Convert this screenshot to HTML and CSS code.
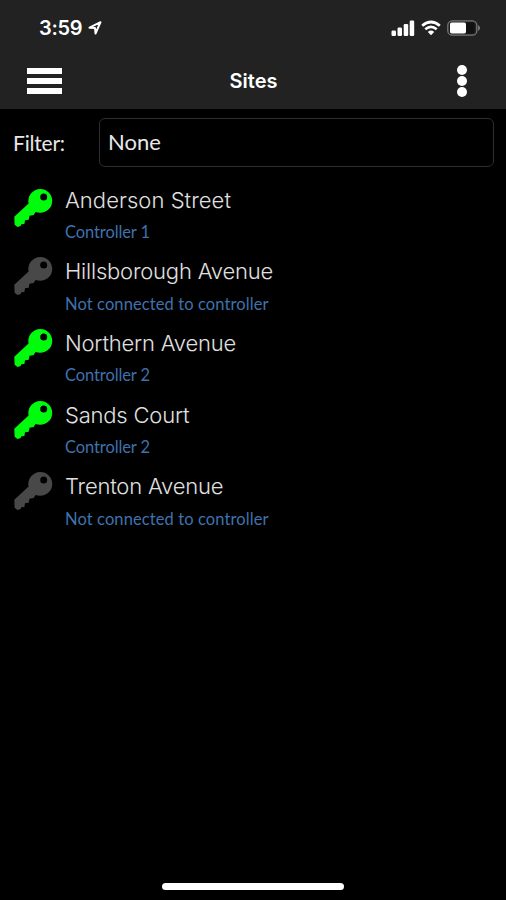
FILE: index.html
```html
<!DOCTYPE html>
<html lang="en">

<head>
    <meta charset="UTF-8">
    <meta name="viewport" content="width=device-width, initial-scale=1.0">
    <title>Sites</title>
    <link rel="stylesheet" href="styles.css">
</head>

<body>
    <svg class="sprite" aria-hidden="true">
        <symbol id="key" viewBox="0 0 40 40">
            <path fill-rule="evenodd" d="M27.300 1a11.900 11.900 0 0 1 0 23.800q-2.800 0-4.800-.800l-1.800 3-4.200.700-.800 4.100-3.700.500-.600 3.700-3.200.200-.500 1.900-3.200 1-2.900-2.300-.300-8L15.600 15.500A11.900 11.900 0 0 1 27.300 1zM30.700 5.500a3.500 3.500 0 1 0 0 7a3.500 3.500 0 0 0 0-7z" />
        </symbol>
    </svg>

    <header class="top">
        <div class="status">
            <div class="status-left">
                <span class="time">3:59</span>
                <svg class="location" width="14" height="14" viewBox="0 0 14 14">
                    <path d="M1.500 6.700 12.500 1.200 7.500 12.500 7 7z" fill="none" stroke="#fff" stroke-width="2" stroke-linejoin="round" />
                </svg>
            </div>
            <div class="status-right">
                <svg width="24" height="17" viewBox="0 0 24 17" fill="#fff">
                    <rect x="0.500" y="10.500" width="4.500" height="5.500" rx="1.200" />
                    <rect x="6.500" y="7.500" width="4.500" height="8.500" rx="1.200" />
                    <rect x="12.700" y="4" width="4.500" height="12" rx="1.200" />
                    <rect x="18.700" y="0.500" width="4.500" height="15.500" rx="1.200" />
                </svg>
                <svg width="20" height="16" viewBox="0 0 20 16">
                    <path d="M1.200 5.800Q10-1.800 18.800 5.800M4.300 9.300Q10 4.300 15.700 9.300" fill="none" stroke="#fff" stroke-width="2.700" />
                    <path d="M6.800 11.900Q10 9.300 13.200 11.900L10 15.300z" fill="#fff" />
                </svg>
                <svg width="34" height="16" viewBox="0 0 34 16">
                    <rect x="0.800" y="0.800" width="29" height="14.400" rx="4.500" fill="none" stroke="#777" stroke-width="1.300" />
                    <rect x="3" y="2.500" width="16" height="11" rx="1.800" fill="#fff" />
                    <rect x="19" y="2.500" width="8.500" height="11" rx="1.500" fill="#111" />
                    <path d="M31.300 5q3 3 0 6z" fill="#999" />
                </svg>
            </div>
        </div>
        <nav class="navbar">
            <button class="menu" aria-label="Menu">
                <span></span>
                <span></span>
                <span></span>
            </button>
            <h1>Sites</h1>
            <button class="more" aria-label="More">
                <span></span>
                <span></span>
                <span></span>
            </button>
        </nav>
    </header>

    <main>
        <section class="filter">
            <span class="filter-label">Filter:</span>
            <div class="filter-box">None</div>
        </section>
        <ul class="sites">
            <li class="site online">
                <svg class="key"><use href="#key" /></svg>
                <div>
                    <p class="name wide">Anderson Street</p>
                    <p class="controller">Controller 1</p>
                </div>
            </li>
            <li class="site">
                <svg class="key"><use href="#key" /></svg>
                <div>
                    <p class="name">Hillsborough Avenue</p>
                    <p class="controller none">Not connected to controller</p>
                </div>
            </li>
            <li class="site online">
                <svg class="key"><use href="#key" /></svg>
                <div>
                    <p class="name">Northern Avenue</p>
                    <p class="controller">Controller 2</p>
                </div>
            </li>
            <li class="site online">
                <svg class="key"><use href="#key" /></svg>
                <div>
                    <p class="name">Sands Court</p>
                    <p class="controller">Controller 2</p>
                </div>
            </li>
            <li class="site">
                <svg class="key"><use href="#key" /></svg>
                <div>
                    <p class="name">Trenton Avenue</p>
                    <p class="controller none">Not connected to controller</p>
                </div>
            </li>
        </ul>
    </main>

    <footer>
        <div class="home-bar"></div>
    </footer>
</body>

</html>
```
FILE: styles.css
```css
* {
  box-sizing: border-box;
  margin: 0;
  padding: 0;
}

body {
  display: flex;
  flex-direction: column;
  height: 100vh;
  overflow: hidden;
  background-color: #000;
  color: #e8e8e8;
  font-family: Inter, "Liberation Sans", sans-serif;
}

.sprite {
  display: none;
}

.top {
  height: 109px;
  background-color: #222;
  color: #fff;
}

.status {
  display: flex;
  justify-content: space-between;
  align-items: center;
  height: 56px;
  padding: 0 25px 0 39px;
}

.status-left,
.status-right {
  display: flex;
  align-items: center;
  gap: 6px;
}

.time {
  font-size: 20px;
  font-weight: 600;
  letter-spacing: -0.3px;
}

.navbar {
  display: flex;
  justify-content: space-between;
  align-items: center;
  height: 50px;
  padding: 0 39px 0 27px;
}

.navbar h1 {
  font-size: 20px;
  font-weight: 600;
  line-height: 24px;
  padding-right: 12px;
}

button {
  display: flex;
  flex-direction: column;
  background: none;
  border: none;
}

.menu {
  width: 35px;
  gap: 4px;
}

.menu span {
  height: 6px;
  background-color: #fff;
}

.more {
  gap: 1px;
}

.more span {
  width: 10px;
  height: 10px;
  border-radius: 50%;
  background-color: #fff;
}

.filter {
  display: flex;
  align-items: center;
  padding: 9px 12px 0 13px;
  font-family: Lato, sans-serif;
}

.filter-label {
  width: 86px;
  font-size: 21px;
  letter-spacing: -0.2px;
}

.filter-box {
  flex: 1;
  height: 49px;
  padding-left: 8px;
  border: 1.5px solid #2e2e2e;
  border-radius: 6px;
  font-size: 22px;
  line-height: 46px;
}

.sites {
  padding: 17.5px 14px 0 13px;
  list-style: none;
}

.site {
  display: flex;
  gap: 12px;
  height: 71.7px;
  color: #484848;
}

.online {
  color: #00fc0c;
}

.key {
  width: 40px;
  height: 40px;
  fill: currentColor;
}

/* first key sits a bit lower than the rest */
.site:first-child .key {
  margin-top: 3px;
}

.name {
  color: #e0e0e0;
  font-size: 22px;
  font-weight: 300;
  line-height: 30px;
  letter-spacing: -0.2px;
}

.name.wide {
  letter-spacing: 0.05px;
}

.controller {
  margin-top: 6.4px;
  color: #3f72ad;
  font-family: Lato, sans-serif;
  font-size: 16.5px;
  line-height: 22px;
  letter-spacing: -0.1px;
}

.controller.none {
  letter-spacing: 0.1px;
}

footer {
  margin-top: auto;
  padding-bottom: 10px;
}

.home-bar {
  width: 182px;
  height: 7px;
  margin: 0 auto;
  border-radius: 4px;
  background-color: #fff;
}
```
